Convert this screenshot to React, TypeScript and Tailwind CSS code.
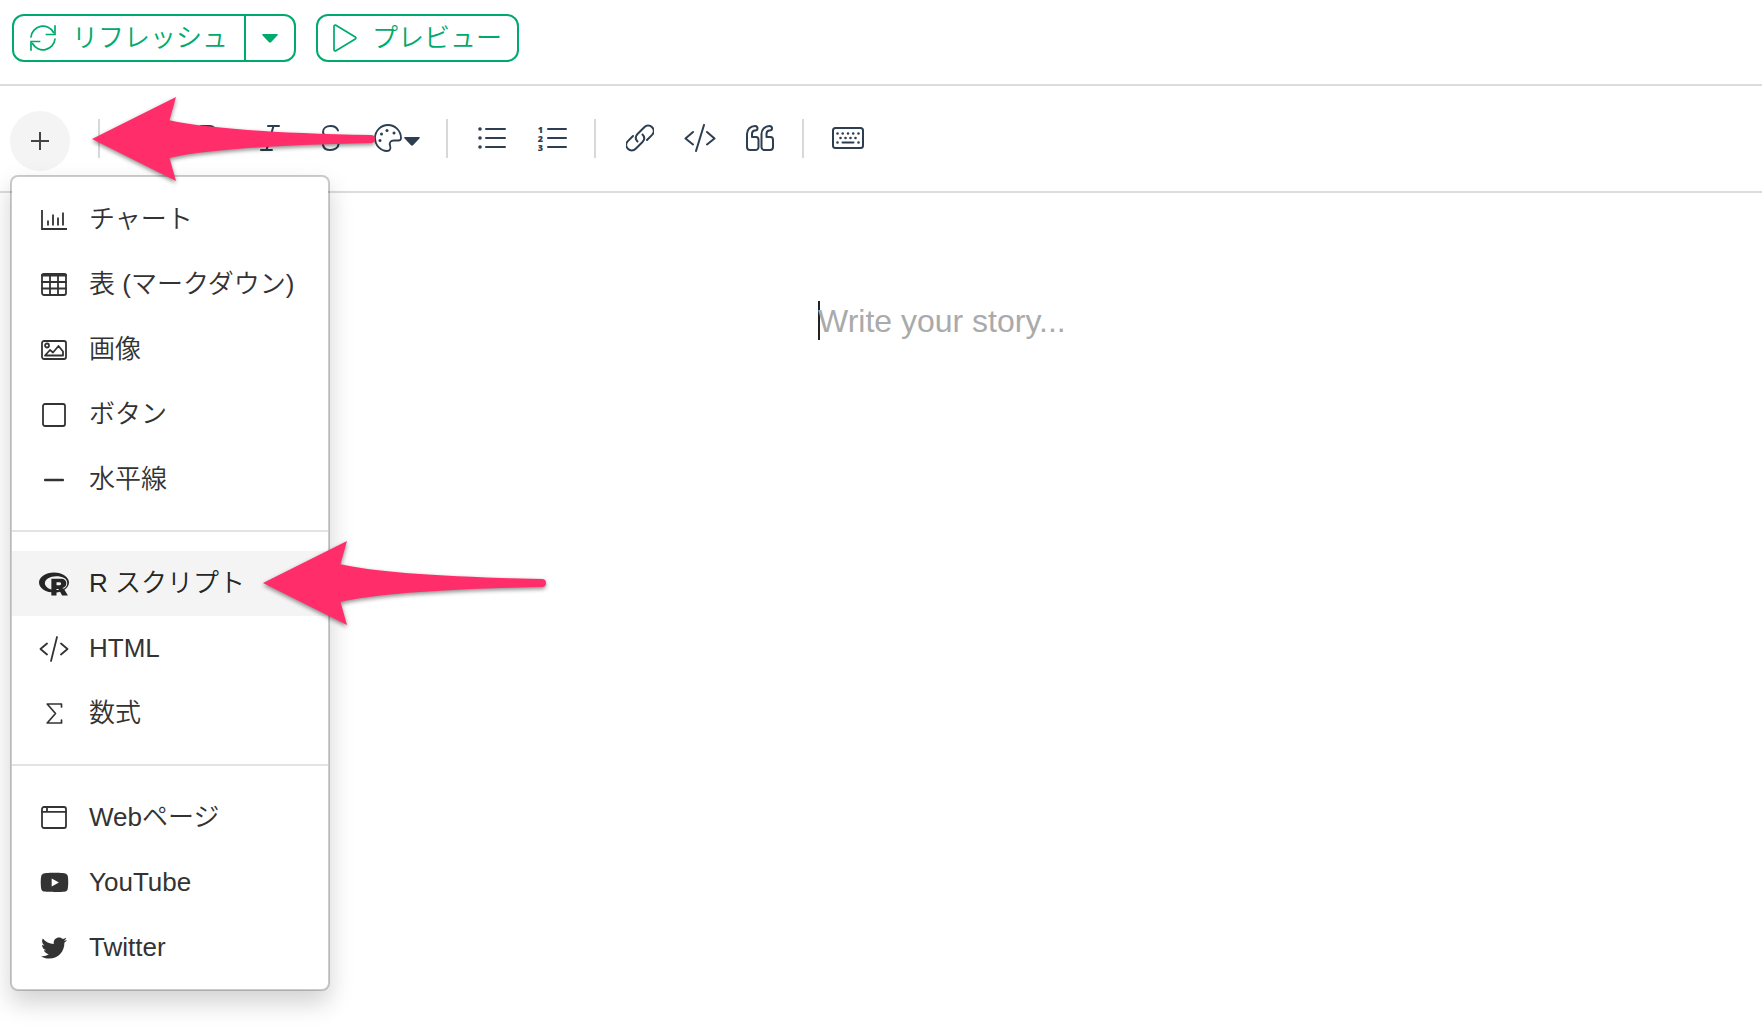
import type { ReactNode } from "react";
import { FaRProject, FaTwitter, FaYoutube } from "react-icons/fa";

type IconProps = { w: number; h: number; sw?: number; children: ReactNode };

function Icon({ w, h, sw = 2, children }: IconProps) {
  return (
    <svg
      width={w}
      height={h}
      viewBox={`0 0 ${w} ${h}`}
      fill="none"
      stroke="currentColor"
      strokeWidth={sw}
      strokeLinecap="round"
      strokeLinejoin="round"
      aria-hidden="true"
      className="shrink-0"
    >
      {children}
    </svg>
  );
}

const RefreshIcon = () => (
  <Icon w={28} h={28} sw={1.7}>
    <path d="M2 13A12 12 0 0 1 24.5 8.5M26 15A12 12 0 0 1 3.500 19.500" />
    <path d="M26 2v8.500h-8.500M2 26v-8.500h8.500" strokeLinecap="square" strokeLinejoin="miter" />
  </Icon>
);

const PlayIcon = () => (
  <Icon w={24} h={28} sw={1.7}>
    <path d="M1 2.300v23.400c0 1 1 1.500 1.900 1L22.300 15c.8-.5.8-1.500 0-2L2.900 1.300C2 .8 1 1.300 1 2.300z" />
  </Icon>
);

const CaretDown = ({ w, h }: { w: number; h: number }) => (
  <svg width={w} height={h} viewBox="0 0 16 9" fill="currentColor" aria-hidden="true" className="shrink-0">
    <path d="M1 0h14c.9 0 1.100.7.600 1.200L9 8.300c-.6.600-1.400.600-2 0L.4 1.200C-.1.700.1 0 1 0z" />
  </svg>
);

const BoldIcon = () => (
  <Icon w={20} h={26}>
    <path d="M1 1h9a5.800 5.800 0 0 1 0 11.600H4M4 1v22M1 23h8a5.200 5.200 0 0 0 0-10.400" />
  </Icon>
);

const ItalicIcon = () => (
  <Icon w={20} h={26}>
    <path d="M8 1h11M1 25h11M13.500 1l-7 24" />
  </Icon>
);

const StrikeIcon = () => (
  <Icon w={28} h={26}>
    <path d="M22 5.500C21 2.500 18 1 14.500 1 10 1 7 3.500 7 7c0 8 15.500 4 15.500 12 0 3.500-3.500 6-8 6S7.500 23 7 20M1 13h26" />
  </Icon>
);

const PaletteIcon = () => (
  <Icon w={28} h={28} sw={1.8}>
    <path d="M14 1C6.800 1 1 6.800 1 14c0 7 5.500 13 12 13 3 0 4-2.200 3.200-4.800C14.800 18 17 16.500 20 16.500h4.500c1.600 0 2.500-.8 2.500-2.500C27 6.800 21.200 1 14 1z" />
    <g fill="currentColor" stroke="none">
      <circle cx="13" cy="6.500" r="1.500" />
      <circle cx="20" cy="9" r="1.500" />
      <circle cx="7.500" cy="10" r="1.500" />
      <circle cx="6" cy="16.500" r="1.500" />
    </g>
  </Icon>
);

const BulletIcon = () => (
  <Icon w={28} h={24}>
    <path d="M8 3h19M8 12h19M8 21h19" />
    <g fill="currentColor" stroke="none">
      <circle cx="2" cy="3" r="1.800" />
      <circle cx="2" cy="12" r="1.800" />
      <circle cx="2" cy="21" r="1.800" />
    </g>
  </Icon>
);

const NumberedIcon = () => (
  <span className="flex items-center gap-[3px]" aria-hidden="true">
    <span className="w-[6px] text-[9px] leading-[9px] font-black font-['Noto_Sans','Open_Sans',sans-serif]">
      1 2 3
    </span>
    <Icon w={20} h={24}>
      <path d="M1 3h18M1 12h18M1 21h18" />
    </Icon>
  </span>
);

const LinkIcon = () => (
  <Icon w={28} h={28}>
    <path d="M11.500 17.500c-2.200-2.300-2.200-5.200 0-7.500l6.800-6.800a5.500 5.500 0 0 1 7.800 0c2.100 2.200 2.100 5.500 0 7.700L21 16" />
    <path d="M16.500 10.500c2.200 2.300 2.200 5.200 0 7.500l-6.800 6.800a5.500 5.500 0 0 1-7.800 0c-2.100-2.200-2.100-5.500 0-7.700L7 12" />
  </Icon>
);

const CodeIcon = ({ sw = 2 }: { sw?: number }) => (
  <Icon w={32} h={28} sw={sw}>
    <path d="M9 8l-7.500 6.500L9 20.500M23 8l7.500 6.500L23 20.500M20 1l-8 26" />
  </Icon>
);

const CodeSmallIcon = () => (
  <Icon w={30} h={26} sw={1.8}>
    <path d="M8 7.500L1.500 13 8 18.500M22 7.500l6.500 5.500-6.500 5.500M18 1l-6 24" />
  </Icon>
);

const QuoteIcon = () => (
  <Icon w={28} h={26}>
    <path d="M10 12H6V9c0-2 1.200-3.500 3-3.500 1.500 0 2.500-.5 2.500-2S10.500 1 9 1C4.500 1 1 4.500 1 9v13a3 3 0 0 0 3 3h5.500a3 3 0 0 0 3-3v-7c0-2-1-3-2.500-3z" />
    <path d="M24.500 12H20.500V9c0-2 1.200-3.500 3-3.500 1.500 0 2.500-.5 2.500-2S25 1 23.500 1C19 1 15.500 4.500 15.500 9v13a3 3 0 0 0 3 3H24a3 3 0 0 0 3-3v-7c0-2-1-3-2.500-3z" />
  </Icon>
);

const KeyboardIcon = () => (
  <Icon w={32} h={22}>
    <rect x="1" y="1" width="30" height="20" rx="2.500" />
    <path
      d="M5.500 6.500h.01M10.700 6.500h.01M16 6.500h.01M21.200 6.500h.01M26.500 6.500h.01M8.500 11h.01M13.500 11h.01M18.500 11h.01M23.500 11h.01M5.500 15.500h.01M26.500 15.500h.01"
      strokeWidth="2.600"
    />
    <path d="M10.500 15.500h11" />
  </Icon>
);

const ChartIcon = () => (
  <Icon w={26} h={20} sw={1.8}>
    <path d="M1 .8v18.200h24.200M7 14.500v-3M12 14.500v-9M17 14.500v-6M22 14.500V3.500" strokeLinecap="square" strokeLinejoin="miter" />
  </Icon>
);

const TableIcon = () => (
  <Icon w={26} h={23} sw={1.8}>
    <rect x="1" y="1" width="24" height="21" rx="2" />
    <path d="M1.500 2h23" strokeWidth="3" />
    <path d="M1 9h24M1 15.500h24M9 2v20M17 2v20" />
  </Icon>
);

const ImageIcon = () => (
  <Icon w={26} h={20} sw={1.8}>
    <rect x="1" y="1" width="24" height="18" rx="2" />
    <circle cx="6" cy="5.500" r="2" />
    <path d="M4 15.500l5-5.500 3 2.500 5.500-6.500 4.500 5.500v4z" />
  </Icon>
);

const SquareIcon = () => (
  <Icon w={24} h={24} sw={1.8}>
    <rect x="1" y="1" width="22" height="22" rx="2" />
  </Icon>
);

const LineIcon = () => (
  <Icon w={20} h={4} sw={2.4}>
    <path d="M1 2h18" />
  </Icon>
);

const SigmaIcon = () => (
  <Icon w={17} h={21} sw={1.7}>
    <path d="M15.500 4V1H1.200l8.300 9.500L1.200 20h14.300v-3" />
  </Icon>
);

const WindowIcon = () => (
  <Icon w={26} h={23} sw={1.8}>
    <rect x="1" y="1" width="24" height="21" rx="2" />
    <path d="M1 5.800h24M6 1v4.800" />
  </Icon>
);

const menuGroups: { label: string; icon: ReactNode; active?: boolean }[][] = [
  [
    { label: "チャート", icon: <ChartIcon /> },
    { label: "表 (マークダウン)", icon: <TableIcon /> },
    { label: "画像", icon: <ImageIcon /> },
    { label: "ボタン", icon: <SquareIcon /> },
    { label: "水平線", icon: <LineIcon /> },
  ],
  [
    { label: "R スクリプト", icon: <FaRProject size={30} />, active: true },
    { label: "HTML", icon: <CodeSmallIcon /> },
    { label: "数式", icon: <SigmaIcon /> },
  ],
  [
    { label: "Webページ", icon: <WindowIcon /> },
    { label: "YouTube", icon: <FaYoutube size={29} /> },
    { label: "Twitter", icon: <FaTwitter size={26} /> },
  ],
];

function InsertMenu() {
  return (
    <div
      role="menu"
      className="absolute top-full left-0 z-10 mt-1 w-80 rounded-lg border-2 border-black/20 bg-white bg-clip-padding pt-[10px] pb-[9px] shadow-[0_12px_24px_rgba(0,0,0,0.175)]"
    >
      {menuGroups.map((group, i) => (
        <div key={i}>
          {i > 0 && <hr className="mt-[18px] mb-[19px] border-t-2 border-[#e3e3e3]" />}
          {group.map((item) => (
            <button
              key={item.label}
              type="button"
              role="menuitem"
              className={
                item.active
                  ? "flex h-[65px] w-full items-center gap-[17px] bg-[#f4f4f4] pl-6 text-left text-[26px] whitespace-nowrap text-[#262626]"
                  : "flex h-[65px] w-full items-center gap-[17px] pl-6 text-left text-[26px] whitespace-nowrap text-[#333333]"
              }
            >
              <span className="flex w-9 shrink-0 justify-center">{item.icon}</span>
              {item.label}
            </button>
          ))}
        </div>
      ))}
    </div>
  );
}

function Tool({ label, children }: { label: string; children: ReactNode }) {
  return (
    <button type="button" aria-label={label} className="flex h-10 w-15 items-center justify-center">
      {children}
    </button>
  );
}

const Divider = () => <span className="mr-[14px] ml-3 h-[39px] w-[2px] shrink-0 bg-[#d8d8d8]" />;

function Arrow() {
  return (
    <svg
      width="284"
      height="86"
      viewBox="0 0 284 86"
      fill="#ff2e6b"
      aria-hidden="true"
      className="drop-shadow-[0_2px_2px_rgba(0,0,0,0.45)]"
    >
      <path d="M0 42L84 0l-6.500 23.300Q130 35 279 38a4 4 0 0 1 0 8Q130 49 77.500 61L84 84z" />
    </svg>
  );
}

export default function App() {
  return (
    <div
      className="min-h-screen bg-white font-['Liberation_Sans','Noto_Sans_CJK_JP',sans-serif] font-[350]"
      lang="ja"
    >
      <header className="flex h-[86px] items-start gap-5 border-b-2 border-[#dcdcdc] pt-[14px] pl-3 text-[26px] text-[#00aa6c]">
        <div className="flex h-12 rounded-xl border-2 border-[#00aa6c]">
          <button type="button" className="flex items-center gap-[15px] pr-4 pl-[15px]">
            <RefreshIcon />
            リフレッシュ
          </button>
          <button
            type="button"
            aria-label="リフレッシュのオプション"
            className="flex w-[50px] items-center justify-center border-l-2 border-[#00aa6c]"
          >
            <CaretDown w={16} h={9} />
          </button>
        </div>
        <button type="button" className="flex h-12 items-center gap-[15px] rounded-xl border-2 border-[#00aa6c] px-[15px]">
          <PlayIcon />
          プレビュー
        </button>
      </header>

      <div className="relative flex h-[107px] items-start border-b-2 border-[#dcdcdc] pt-[25px] pl-[10px] text-[#2c3e50]">
        <div className="relative">
          <button
            type="button"
            aria-label="挿入"
            aria-haspopup="menu"
            aria-expanded="true"
            className="flex size-15 items-center justify-center rounded-full bg-[#f4f4f4] text-[#444444]"
          >
            <Icon w={20} h={20}>
              <path d="M1 10h18M10 1v18" strokeLinecap="butt" />
            </Icon>
          </button>
          <InsertMenu />
        </div>
        <div className="mt-[7px] flex items-center">
          <span className="mr-20 ml-7 h-[39px] w-[2px] shrink-0 bg-[#d8d8d8]" />
          <Tool label="太字">
            <BoldIcon />
          </Tool>
          <Tool label="斜体">
            <ItalicIcon />
          </Tool>
          <Tool label="取り消し線">
            <StrikeIcon />
          </Tool>
          <button type="button" aria-label="文字色" className="flex h-10 w-[74px] items-center gap-[2px] pl-[14px]">
            <PaletteIcon />
            <span className="mt-[7px]">
              <CaretDown w={16} h={9} />
            </span>
          </button>
          <Divider />
          <Tool label="箇条書き">
            <BulletIcon />
          </Tool>
          <Tool label="番号付きリスト">
            <NumberedIcon />
          </Tool>
          <Divider />
          <Tool label="リンク">
            <LinkIcon />
          </Tool>
          <Tool label="コード">
            <CodeIcon />
          </Tool>
          <Tool label="引用">
            <QuoteIcon />
          </Tool>
          <Divider />
          <Tool label="キーボード">
            <KeyboardIcon />
          </Tool>
        </div>
        <div className="pointer-events-none absolute top-[11px] left-[92px] z-20">
          <Arrow />
        </div>
        <div className="pointer-events-none absolute top-[455px] left-[263px] z-20">
          <Arrow />
        </div>
      </div>

      <main className="flex justify-center pt-[106px] pl-[126px]">
        <div className="flex items-center">
          <span className="h-[39px] w-[2px] bg-[#222222]" />
          <input
            type="text"
            aria-label="本文"
            placeholder="Write your story..."
            className="-ml-[2px] h-[43px] w-[252px] text-[32px] text-[#333333] outline-none placeholder:text-[#aaaaaa]"
          />
        </div>
      </main>
    </div>
  );
}
